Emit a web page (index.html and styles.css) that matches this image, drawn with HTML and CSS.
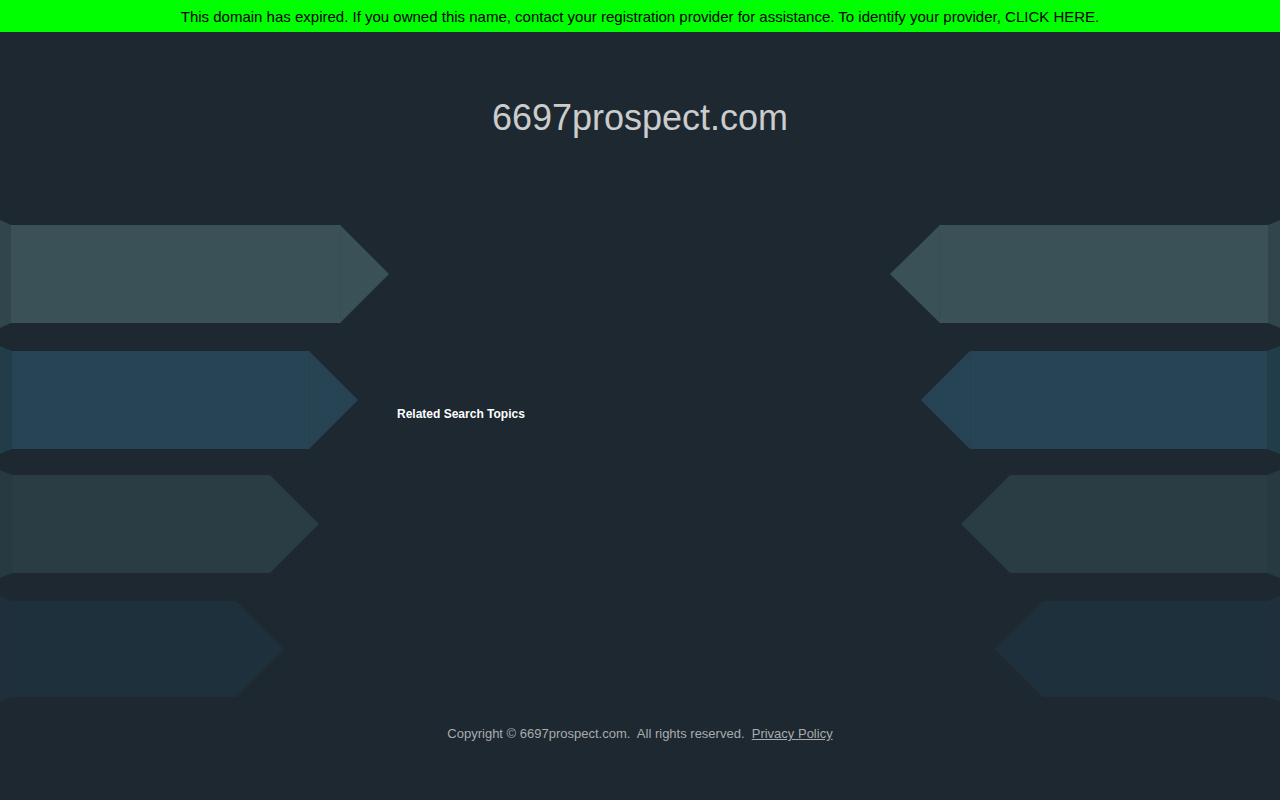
FILE: index.html
```html
<!DOCTYPE html>
<html lang="en">
<head>
<meta charset="utf-8">
<title>6697prospect.com</title>
<link rel="stylesheet" href="styles.css">
</head>
<body>
<div class="topbar">This domain has expired. If you owned this name, contact your registration provider for assistance. To identify your provider, CLICK HERE.</div>
<header class="title-wrap"><h1 class="title">6697prospect.com</h1></header>
<main class="arrows">
  <div class="col col-left">
    <svg class="arrow" width="390" height="108" viewBox="0 0 390 108">
      <polygon points="0,0 11,5 11,103 0,108" fill="#30464b"/>
      <polygon points="11,5 340,5 389,54 340,103 11,103" fill="#3a5257"/>
      <line x1="340.5" y1="5" x2="340.5" y2="103" stroke="#374d52" stroke-width="1"/>
    </svg>
    <svg class="arrow arrow-even" width="390" height="108" viewBox="0 0 390 108">
      <polygon points="0,0 12,5 12,103 0,108" fill="#223c49"/>
      <polygon points="12,5 309,5 358,54 309,103 12,103" fill="#264453"/>
      <line x1="309.5" y1="5" x2="309.5" y2="103" stroke="#25414f" stroke-width="1"/>
    </svg>
    <svg class="arrow" width="390" height="108" viewBox="0 0 390 108">
      <polygon points="0,0 12,5 12,103 0,108" fill="#283a41"/>
      <polygon points="12,5 270,5 319,54 270,103 12,103" fill="#2b3d44"/>
    </svg>
    <svg class="arrow arrow-even" width="390" height="106" viewBox="0 0 390 106">
      <polygon points="0,0 12,5 12,101 0,106" fill="#1f2f3b"/>
      <polygon points="12,5 236,5 284,53 236,101 12,101" fill="#1f303d"/>
      <line x1="236.5" y1="5" x2="236.5" y2="101" stroke="#1e2e3b" stroke-width="1"/>
    </svg>
  </div>
  <div class="col col-mid">
    <h2 class="topics">Related Search Topics</h2>
  </div>
  <div class="col col-right">
    <svg class="arrow" width="390" height="108" viewBox="0 0 390 108">
      <polygon points="390,0 378,5 378,103 390,108" fill="#30464b"/>
      <polygon points="378,5 50,5 0,54 50,103 378,103" fill="#3a5257"/>
      <line x1="49.5" y1="5" x2="49.5" y2="103" stroke="#374d52" stroke-width="1"/>
    </svg>
    <svg class="arrow arrow-even" width="390" height="108" viewBox="0 0 390 108">
      <polygon points="390,0 377,5 377,103 390,108" fill="#223c49"/>
      <polygon points="377,5 80,5 31,54 80,103 377,103" fill="#264453"/>
      <line x1="80.5" y1="5" x2="80.5" y2="103" stroke="#25414f" stroke-width="1"/>
    </svg>
    <svg class="arrow" width="390" height="108" viewBox="0 0 390 108">
      <polygon points="390,0 377,5 377,103 390,108" fill="#283a41"/>
      <polygon points="377,5 120,5 71,54 120,103 377,103" fill="#2b3d44"/>
    </svg>
    <svg class="arrow arrow-even" width="390" height="106" viewBox="0 0 390 106">
      <polygon points="390,0 377,5 377,101 390,106" fill="#1f2f3b"/>
      <polygon points="377,5 153,5 105,53 153,101 377,101" fill="#1f303d"/>
      <line x1="153.5" y1="5" x2="153.5" y2="101" stroke="#1e2e3b" stroke-width="1"/>
    </svg>
  </div>
</main>
<footer class="footer">Copyright © 6697prospect.com.&nbsp; All rights reserved.&nbsp; <a class="privacy" href="#">Privacy Policy</a></footer>
</body>
</html>
```

FILE: styles.css
```css
html, body {
  margin: 0;
  padding: 0;
}
body {
  background: #1d2831;
  font-family: "Liberation Sans", Arial, sans-serif;
  width: 1280px;
  height: 800px;
  overflow: hidden;
}
.topbar {
  height: 32px;
  line-height: 34px;
  background: #00ff00;
  color: #000;
  font-size: 15px;
  text-align: center;
}
.title-wrap {
  height: 188px;
  display: flex;
  justify-content: center;
}
.title {
  margin: 65px 0 0;
  font-size: 36px;
  font-weight: normal;
  line-height: 42px;
  color: #cccccc;
}
.arrows {
  display: flex;
  justify-content: space-between;
}
.col {
  display: flex;
  flex-direction: column;
}
.col-left, .col-right {
  width: 390px;
  gap: 16px;
}
.arrow {
  display: block;
  flex-shrink: 0;
}
.arrow-even {
  margin-top: 2px;
}
.col-mid {
  flex: 1;
  padding: 187px 0 0 7px;
}
.topics {
  margin: 0;
  font-size: 12px;
  line-height: 14px;
  font-weight: bold;
  color: #ffffff;
}
.footer {
  margin-top: 24px;
  text-align: center;
  font-size: 13px;
  line-height: 15px;
  color: #a9acae;
}
.privacy {
  color: #a9acae;
  text-decoration: underline;
}
```
